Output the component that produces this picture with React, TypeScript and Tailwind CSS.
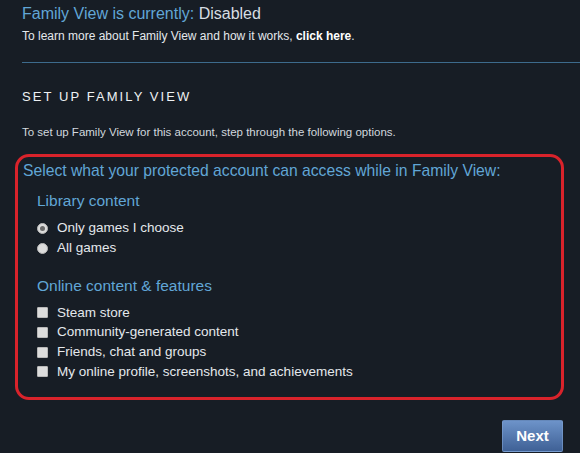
import { useState } from 'react';

const FEATURES = [
  'Steam store',
  'Community-generated content',
  'Friends, chat and groups',
  'My online profile, screenshots, and achievements',
];

export default function App() {
  const [library, setLibrary] = useState<'choose' | 'all'>('choose');
  const [checked, setChecked] = useState<boolean[]>(FEATURES.map(() => false));

  return (
    <div
      className="w-[580px] h-[453px] bg-[#171d25] text-[#c6d4df] overflow-hidden"
      style={{ fontFamily: 'Arial, "Liberation Sans", sans-serif' }}
    >
      <div className="pl-[22px] pt-[3px]">
        <div className="text-[16px] leading-[22px]">
          <span className="text-[#61a6d6]">Family View is currently:</span>{' '}
          <span className="text-[#d6dde3]">Disabled</span>
        </div>
        <p className="mt-[4px] text-[12px] leading-[14px] text-[#e4e8ec]">
          To learn more about Family View and how it works,{' '}
          <a className="font-bold text-white cursor-pointer">click here</a>.
        </p>
      </div>

      <div className="ml-[22px] mt-[19px] h-px bg-[#3d6b8d]" />

      <h2 className="pl-[22px] mt-[26px] text-[13px] leading-[16px] tracking-[0.16em] text-[#eef1f3] font-medium">
        SET UP FAMILY VIEW
      </h2>

      <p className="pl-[22px] mt-[20px] text-[11.5px] leading-[14px] text-[#d2d8de]">
        To set up Family View for this account, step through the following options.
      </p>

      <div className="ml-[15px] mt-[15px] w-[549px] h-[246px] border-[3.5px] border-[#d9232b] rounded-[14px] pl-[5px] pt-[4px]">
        <p className="text-[15.7px] leading-[19px] text-[#61a6d6]">
          Select what your protected account can access while in Family View:
        </p>

        <div className="pl-[14px]">
          <h3 className="mt-[11px] text-[15.5px] leading-[19px] text-[#61a6d6]">Library content</h3>
          <div className="mt-[8px] flex flex-col">
            {[
              { key: 'choose' as const, label: 'Only games I choose' },
              { key: 'all' as const, label: 'All games' },
            ].map((o) => (
              <label key={o.key} className="flex items-center h-[20px] cursor-pointer">
                <span
                  onClick={() => setLibrary(o.key)}
                  className="w-[11px] h-[11px] rounded-full bg-[#dcdcdc] border border-[#b8b8b8] flex items-center justify-center"
                >
                  {library === o.key && <span className="w-[5px] h-[5px] rounded-full bg-[#6a6a6a]" />}
                </span>
                <span className="ml-[9px] text-[13.5px] text-[#e4e8ec]">{o.label}</span>
              </label>
            ))}
          </div>

          <h3 className="mt-[18px] text-[15.5px] leading-[19px] text-[#61a6d6]">Online content &amp; features</h3>
          <div className="mt-[8px] flex flex-col">
            {FEATURES.map((f, i) => (
              <label key={f} className="flex items-center h-[19.7px] cursor-pointer">
                <span
                  onClick={() => setChecked((c) => c.map((v, j) => (j === i ? !v : v)))}
                  className="w-[11px] h-[11px] rounded-[1px] bg-[#dcdcdc] border border-[#b8b8b8] flex items-center justify-center text-[9px] leading-none text-[#333]"
                >
                  {checked[i] ? '✓' : ''}
                </span>
                <span className="ml-[9px] text-[13.5px] text-[#e4e8ec]">{f}</span>
              </label>
            ))}
          </div>
        </div>
      </div>

      <div className="flex justify-end pr-[17px] mt-[20px]">
        <button className="w-[61px] h-[32px] rounded-[2px] bg-gradient-to-b from-[#6d93c9] to-[#3f6196] text-white text-[15px] font-bold border border-[#7fa2d2]/60">
          Next
        </button>
      </div>
    </div>
  );
}
